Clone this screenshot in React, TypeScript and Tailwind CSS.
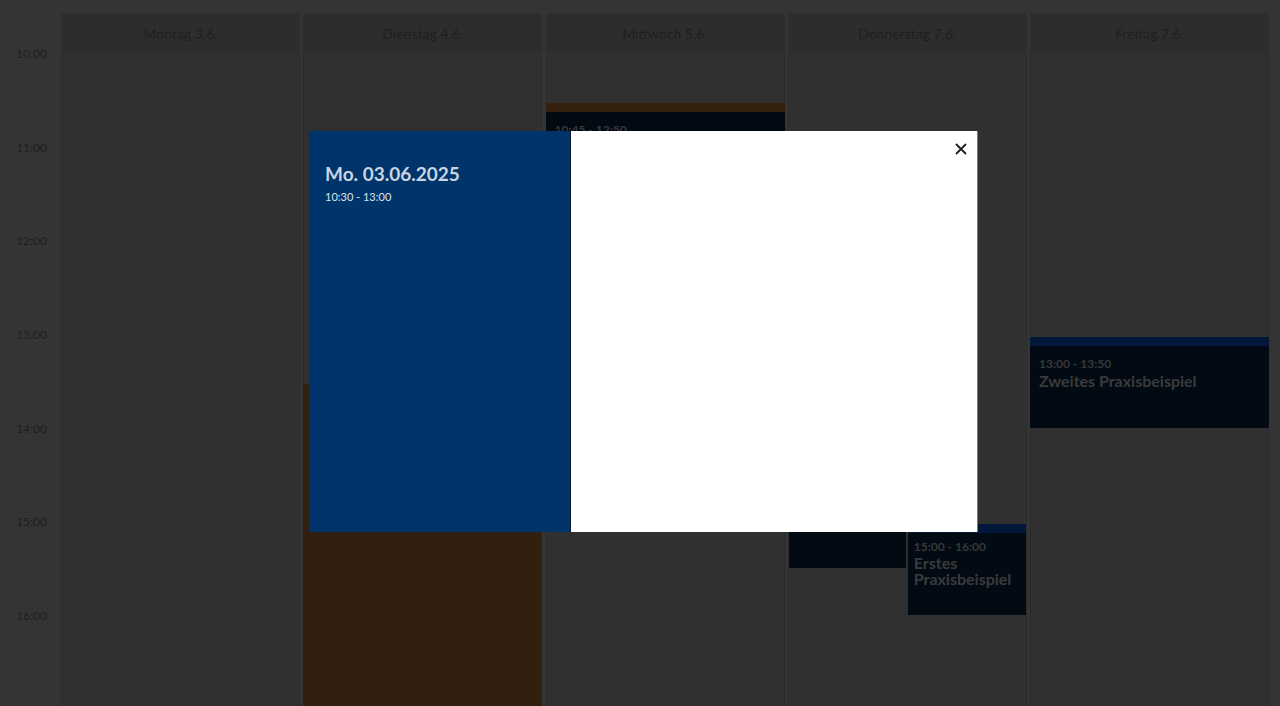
import React from "react";

const HOUR = 93.67;
const hours = [10, 11, 12, 13, 14, 15, 16, 17];

type Ev = {
  start: number;
  end: number;
  left?: number;
  width?: number;
  bar: string;
  body: string;
  time?: string;
  title?: string;
  px: number;
  pt: number;
  gap: number;
};

const days: { label: string; events: Ev[] }[] = [
  { label: "Montag 3.6.", events: [] },
  {
    label: "Dienstag 4.6.",
    events: [{ start: 13.5, end: 18, bar: "#311f10", body: "#311f10", px: 9, pt: 11, gap: 3 }],
  },
  {
    label: "Mittwoch 5.6.",
    events: [
      {
        start: 10.5,
        end: 13,
        bar: "#33200f",
        body: "#020a14",
        time: "10:45 - 12:50",
        px: 9,
        pt: 11,
        gap: 3,
      },
    ],
  },
  {
    label: "Donnerstag 7.6.",
    events: [
      { start: 14, end: 15.5, left: 1, width: 117, bar: "#02183a", body: "#020a14", px: 6, pt: 8, gap: 2 },
      {
        start: 15,
        end: 16,
        left: 120,
        width: 118,
        bar: "#02183a",
        body: "#020a14",
        time: "15:00 - 16:00",
        title: "Erstes Praxisbeispiel",
        px: 6,
        pt: 7,
        gap: 1,
      },
    ],
  },
  {
    label: "Freitag 7.6.",
    events: [
      {
        start: 13,
        end: 14,
        bar: "#02183a",
        body: "#020a14",
        time: "13:00 - 13:50",
        title: "Zweites Praxisbeispiel",
        px: 9,
        pt: 11,
        gap: 2,
      },
    ],
  },
];

export default function App() {
  return (
    <div
      className="relative w-[1280px] h-[706px] overflow-hidden bg-[#343434]"
      style={{ fontFamily: "Lato, 'Noto Sans', sans-serif" }}
    >
      <div className="flex pt-[13px] pr-[11px]">
        {/* time column */}
        <div className="w-[61px] shrink-0 flex flex-col">
          <div className="h-[40px]" />
          <div className="relative">
            {hours.map((h, i) => (
              <div
                key={h}
                className="absolute right-[14px] text-[12px] leading-none text-[#1f1f1f]"
                style={{ top: 1 + i * HOUR - 6 }}
              >
                {h}:00
              </div>
            ))}
          </div>
        </div>
        {/* day columns */}
        <div className="flex-1 grid grid-cols-5 gap-[3.25px]">
          {days.map((d) => (
            <div key={d.label} className="flex flex-col">
              <div className="h-[40px] rounded-[4px] bg-[#2d2d2d] flex items-center justify-center text-[14px] text-[#1f1f1f]">
                {d.label}
              </div>
              <div className="relative h-[700px] bg-[#303030] shadow-[inset_1px_0_0_#2c2c2c,inset_-1px_0_0_#2c2c2c]">
                {d.events.map((e, i) => (
                  <div
                    key={i}
                    className="absolute overflow-hidden"
                    style={{
                      top: 3 + (e.start - 10) * HOUR,
                      height: (e.end - e.start) * HOUR - 3,
                      left: e.left ?? 0,
                      width: e.width ?? "100%",
                      background: e.body,
                      borderTop: `9px solid ${e.bar}`,
                      paddingLeft: e.px,
                      paddingRight: e.px,
                      paddingTop: e.pt,
                    }}
                  >
                    {e.time && (
                      <div className="text-[12px] font-bold leading-[14px] text-[#383838]">{e.time}</div>
                    )}
                    {e.title && (
                      <div
                        className="text-[16px] font-bold leading-[16px] text-[#3b3b3b]"
                        style={{ marginTop: e.gap }}
                      >
                        {e.title}
                      </div>
                    )}
                  </div>
                ))}
              </div>
            </div>
          ))}
        </div>
      </div>

      {/* modal */}
      <div className="absolute left-[309px] top-[131px] w-[669px] h-[401px] flex">
        <div className="w-[262px] bg-[#00346a] border-r border-[#0d1a2c] px-[16px] pt-[32px]">
          <div className="text-[19px] font-bold leading-[22px] text-[#cad5e2]">Mo. 03.06.2025</div>
          <div className="mt-[5px] text-[11px] leading-[14px] text-[#dde4ec]">10:30 - 13:00</div>
        </div>
        <div className="relative flex-1 bg-white border-r border-[#7a7a7a]">
          <button className="absolute right-[9px] top-[10px] w-[15px] h-[15px] flex items-center justify-center">
            <svg width="12" height="12" viewBox="0 0 12 12">
              <path d="M1 1 L11 11 M11 1 L1 11" stroke="#1e1e1e" strokeWidth="1.8" />
            </svg>
          </button>
        </div>
      </div>
    </div>
  );
}
